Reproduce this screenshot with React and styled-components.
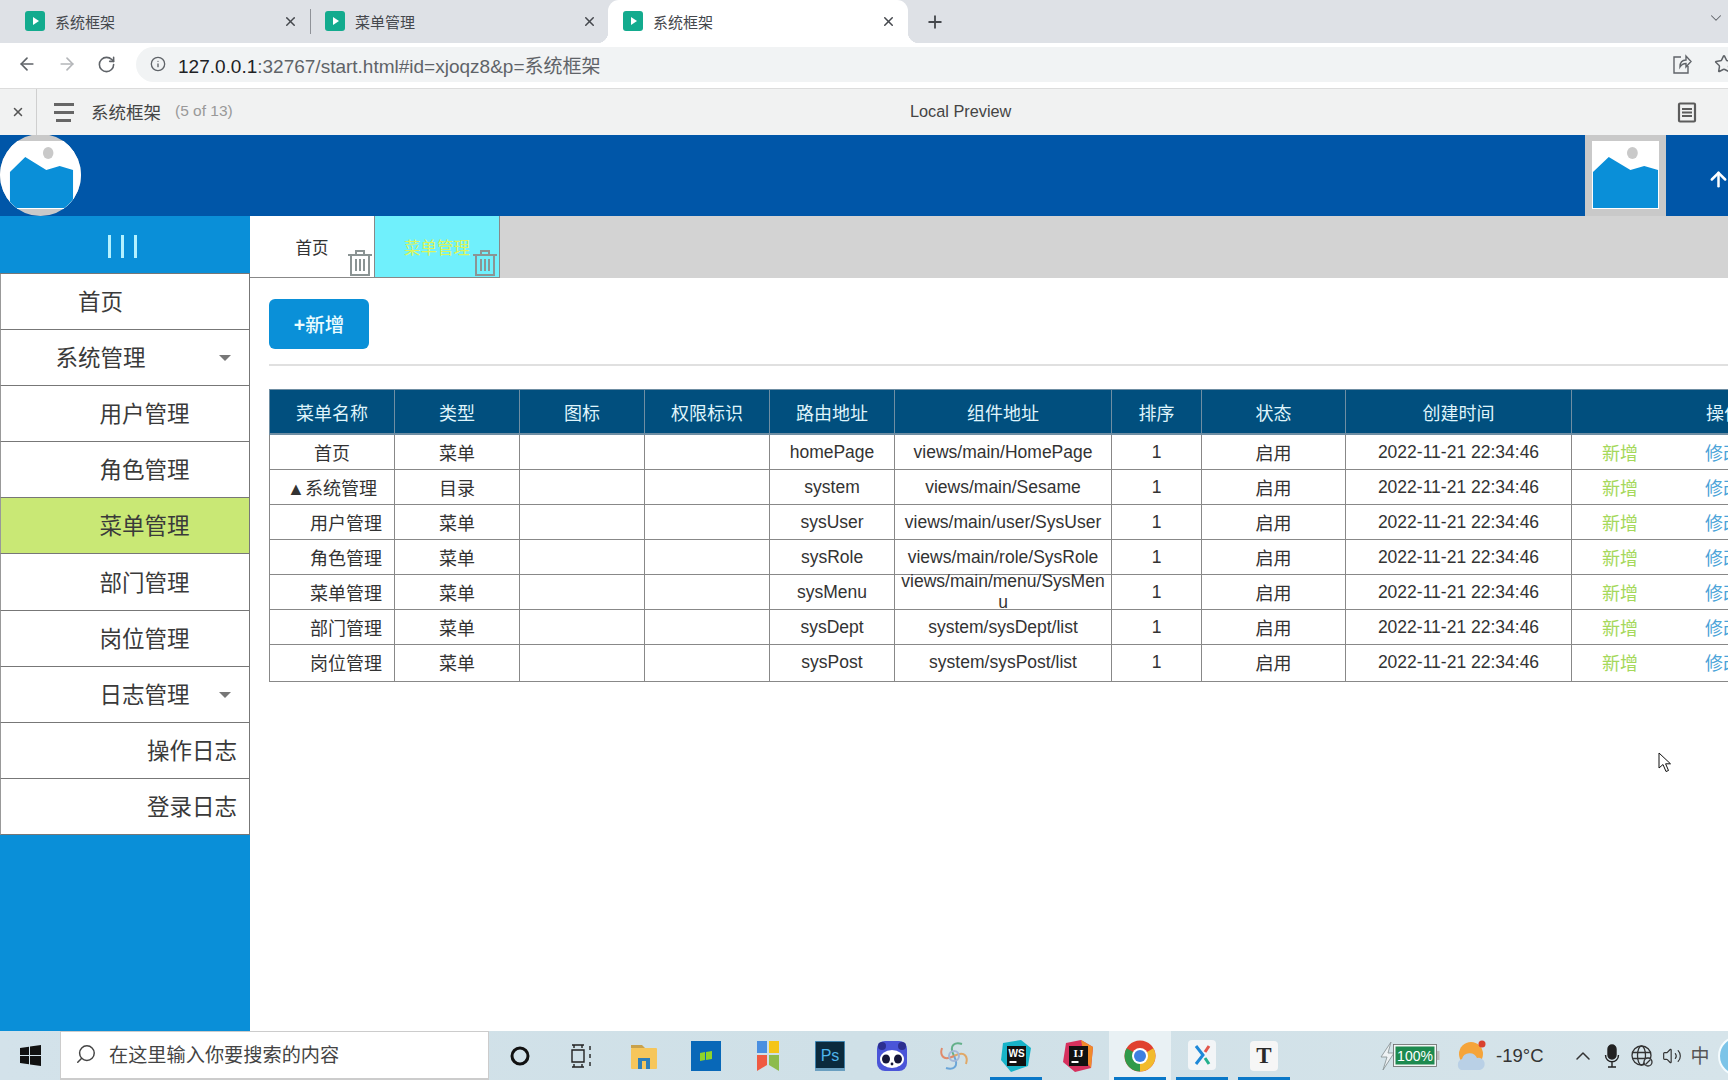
import React from 'react';
import styled, { createGlobalStyle } from 'styled-components';
import { ArrowLeft, ArrowRight, RotateCw, Info, Star, Plus, X, ChevronDown, ChevronUp, Search, Volume2, ArrowUp } from 'lucide-react';

const FONT = '"Liberation Sans", "Noto Sans CJK SC", sans-serif';

const GlobalStyle = createGlobalStyle`
  html, body {
    margin: 0;
    padding: 0;
    background: #fff;
    font-family: ${FONT};
  }
`;

const Page = styled.div`
  position: relative;
  display: flex;
  flex-direction: column;
  width: 1728px;
  height: 1080px;
  overflow: hidden;
  color: #333;
`;

/* browser chrome */
const TabStrip = styled.div`
  display: flex;
  align-items: stretch;
  flex: none;
  height: 43px;
  background: #dee1e6;
`;

const Tab = styled.div`
  position: relative;
  display: flex;
  align-items: center;
  box-sizing: border-box;
  width: ${p => p.$width}px;
  padding: 0 ${p => p.$end}px 1px ${p => p.$pad}px;
  background: ${p => (p.$active ? '#fff' : 'transparent')};
  border-radius: ${p => (p.$active ? '11px 11px 0 0' : '0')};
  color: #45484d;
  font-size: 15px;

  ${p => p.$active && `
    &::before, &::after {
      content: '';
      position: absolute;
      bottom: 0;
      width: 11px;
      height: 11px;
    }
    &::before {
      left: -11px;
      background: radial-gradient(circle at 0 0, #dee1e6 11px, #fff 11.5px);
    }
    &::after {
      right: -11px;
      background: radial-gradient(circle at 100% 0, #dee1e6 11px, #fff 11.5px);
    }
  `}
`;

const Favicon = styled.span`
  display: flex;
  align-items: center;
  justify-content: center;
  flex: none;
  width: 20px;
  height: 20px;
  margin-right: 10px;
  background: #13ab8e;
  border-radius: 3px;

  &::after {
    content: '';
    border-left: 6px solid #fff;
    border-top: 4px solid transparent;
    border-bottom: 4px solid transparent;
    margin-left: 2px;
  }
`;

const TabTitle = styled.span`
  flex: 1;
`;

const TabDivider = styled.span`
  align-self: center;
  flex: none;
  width: 1px;
  height: 25px;
  background: #8f9298;
`;

const NewTab = styled.div`
  display: flex;
  align-items: center;
  margin-left: 17px;
  color: #45484d;
`;

const StripEnd = styled.div`
  display: flex;
  align-items: center;
  margin-left: auto;
  padding: 0 3px 8px 0;
  color: #5f6368;
`;

const AddressBar = styled.div`
  display: flex;
  align-items: center;
  flex: none;
  box-sizing: border-box;
  height: 46px;
  padding: 0 0 3px 17px;
  background: #fff;
  border-bottom: 1px solid #dcdcdc;
`;

const NavButton = styled.span`
  display: flex;
  flex: none;
  width: 40px;
  color: ${p => (p.$disabled ? '#b4b6b9' : '#5f6368')};
`;

const UrlPill = styled.div`
  display: flex;
  align-items: center;
  flex: 1;
  height: 35px;
  margin-left: -1px;
  padding-left: 14px;
  background: #f1f3f4;
  border-radius: 18px 0 0 18px;
`;

const UrlText = styled.span`
  margin-left: 12px;
  color: #5f6368;
  font-size: 19px;

  b {
    font-weight: 400;
    color: #202124;
  }
`;

const UrlIcons = styled.div`
  display: flex;
  align-items: center;
  gap: 22px;
  margin-left: auto;
  margin-right: -6px;
  color: #5f6368;
`;

const PreviewBar = styled.div`
  position: relative;
  display: flex;
  align-items: center;
  flex: none;
  box-sizing: border-box;
  height: 46px;
  background: #f1f2f2;
`;

const PreviewClose = styled.span`
  display: flex;
  justify-content: center;
  align-items: center;
  box-sizing: border-box;
  width: 37px;
  height: 100%;
  border-right: 1px solid #cfcfcf;
  color: #555;
`;

const Hamburger = styled.span`
  display: flex;
  flex-direction: column;
  gap: 5px;
  width: 20px;
  margin-left: 17px;

  i {
    display: block;
    height: 3px;
    background: #666;
  }
  i:last-child {
    width: 15px;
    margin-left: 2px;
  }
`;

const PreviewTitle = styled.span`
  margin: 0 0 2px 17px;
  color: #444;
  font-size: 17.5px;
`;

const PreviewCount = styled.span`
  margin: 0 0 2px 14px;
  color: #999;
  font-size: 15.5px;
`;

const PreviewCenter = styled.span`
  position: absolute;
  left: 910px;
  top: 13px;
  color: #444;
  font-size: 16.3px;
`;

const PreviewDoc = styled.svg`
  position: absolute;
  left: 1677px;
  width: 20px;
  height: 21px;
`;

/* app header */
const AppHeader = styled.header`
  display: flex;
  align-items: stretch;
  flex: none;
  height: 81px;
  background: #0056a8;
`;

const Avatar = styled.div`
  flex: none;
  box-sizing: border-box;
  width: 81px;
  height: 82px;
  margin-top: -1px;
  padding-top: 7px;
  overflow: hidden;
  background: #c9c9c9;
  border-radius: 50%;
`;

const AvatarImage = styled.div`
  display: flex;
  justify-content: center;
  height: 68px;
  background: #fff;
`;

const AvatarPicture = styled.div`
  width: 65px;
  margin-left: 1px;
`;

const UserBox = styled.div`
  flex: none;
  box-sizing: border-box;
  width: 81px;
  height: 82px;
  margin: -1px 0 0 auto;
  padding: 7px;
  background: #c9c9c9;
`;

const HeaderTool = styled.div`
  display: flex;
  align-items: center;
  flex: none;
  box-sizing: border-box;
  width: 62px;
  padding: 7px 0 0 41px;
  color: #fff;

  svg {
    flex: none;
  }
`;

const PictureSvg = styled.svg`
  display: block;
  width: 100%;
  height: 100%;
  background: #fff;
`;

const Picture = () => (
  <PictureSvg viewBox="0 0 68 68" preserveAspectRatio="none">
    <ellipse cx="41" cy="12" rx="5.5" ry="6" fill="#c9c9c9" />
    <path d="M1 31 17 16 39 29 53 25 67 29V67H1Z" fill="#0a8fd8" />
  </PictureSvg>
);

/* body */
const Body = styled.div`
  display: flex;
  flex: 1;
  min-height: 0;
`;

const Sidebar = styled.aside`
  flex: none;
  width: 250px;
  background: #0a8fd8;
`;

const Toggle = styled.div`
  display: flex;
  justify-content: center;
  gap: 10px;
  box-sizing: border-box;
  height: 58px;
  padding: 19px 6px 0 0;
  border-bottom: 1px solid #777;

  i {
    display: block;
    width: 3px;
    height: 23px;
    background: #b4f1ff;
  }
`;

const MenuList = styled.ul`
  margin: 0;
  padding: 0;
  list-style: none;
`;

const MenuItem = styled.li`
  position: relative;
  display: flex;
  align-items: center;
  box-sizing: border-box;
  height: 56.1px;
  padding: 0 0 3px ${p => [0, 44, 134][p.$level]}px;
  background: ${p => (p.$active ? '#c9e875' : '#fff')};
  border: 1px solid #777;
  border-top: 0;
  border-left-color: #999;
  color: #3a3a3a;
  font-size: 22.5px;
`;

const MenuLabel = styled.span`
  width: 199px;
  text-align: center;
`;

const Caret = styled.span`
  position: absolute;
  right: 18px;
  top: 25px;
  border-top: 6px solid #777;
  border-left: 6px solid transparent;
  border-right: 6px solid transparent;
`;

const Main = styled.main`
  position: relative;
  flex: 1;
  min-width: 0;
  overflow: hidden;
  background: #fff;
`;

const PageTabs = styled.div`
  display: flex;
  height: 62px;
  background: #d3d3d3;
`;

const PageTab = styled.div`
  position: relative;
  display: flex;
  align-items: center;
  justify-content: center;
  box-sizing: border-box;
  width: 125px;
  background: ${p => (p.$active ? '#70f0fc' : '#fff')};
  border-bottom: 1px solid #888;
  border-right: 1px solid #888;
  color: ${p => (p.$active ? '#dcf55a' : '#333')};
  font-size: 16.5px;
`;

const TrashIcon = styled.svg`
  position: absolute;
  right: 1px;
  bottom: 0;
  width: 26px;
  height: 28px;
`;

const Trash = () => (
  <TrashIcon viewBox="0 0 26 28" fill="none" stroke="#8b9494" strokeWidth="2">
    <path d="M1 6H25M9 6V2H17V6M4 6V26H22V6M9 10V22M13 10V22M17 10V22" />
  </TrashIcon>
);

const Toolbar = styled.div`
  margin: 21px 0 0 19px;
  padding-bottom: 15px;
  border-bottom: 2px solid #e0e0e0;
`;

const AddButton = styled.button`
  display: block;
  width: 100px;
  height: 50px;
  padding: 0 0 2px;
  background: #0a90d8;
  border: 0;
  border-radius: 6px;
  color: #eafcff;
  font-family: ${FONT};
  font-size: 19.5px;
  font-weight: 500;
`;

const Table = styled.table`
  width: 1607px;
  margin: 23px 0 0 19px;
  border-collapse: collapse;
  table-layout: fixed;
`;

const HeadCell = styled.th`
  height: 43px;
  padding: 0;
  background: #014f7e;
  border: 1px solid #6f8ea3;
  border-bottom-width: 2px;
  color: #dff4fb;
  font-size: 18px;
  font-weight: 400;
`;

const Cell = styled.td`
  height: 34px;
  padding: 0;
  border: 1px solid #888;
  color: #333;
  font-size: 17.5px;
  text-align: center;
  vertical-align: top;

  tr:last-child & {
    height: 36px;
  }
`;

const CellBox = styled.div`
  display: flex;
  align-items: center;
  justify-content: center;
  box-sizing: border-box;
  height: 34px;
  padding: 0 5px 0 ${p => (p.$indent ? 33 : 5)}px;
  line-height: 21px;
  word-break: break-all;
`;

const CjkText = styled.span`
  padding-top: 5px;
  font-size: 18px;
`;

const ActionBox = styled.div`
  display: flex;
  align-items: center;
  gap: 67px;
  height: 34px;
  padding-left: 30px;
  box-sizing: border-box;
  font-size: 18px;
`;

const ActionLink = styled.a`
  color: ${p => p.$color};
`;

const Cursor = styled.svg`
  position: absolute;
  left: 1408px;
  top: 536px;
  width: 14px;
  height: 21px;
`;

/* windows taskbar */
const Taskbar = styled.footer`
  display: flex;
  align-items: stretch;
  flex: none;
  height: 49px;
  background: linear-gradient(90deg, #d3e2ea, #cfe0e7 50%, #d6e4ea);
`;

const StartButton = styled.div`
  display: flex;
  align-items: center;
  justify-content: center;
  flex: none;
  width: 60px;
`;

const SearchBox = styled.div`
  display: flex;
  align-items: center;
  flex: none;
  gap: 12px;
  box-sizing: border-box;
  width: 429px;
  padding: 0 0 2px 14px;
  background: #fff;
  border: 1px solid #ccc;
  border-bottom-width: 2px;
  color: #444;
  font-size: 19.2px;
`;

const TaskItem = styled.div`
  position: relative;
  display: flex;
  align-items: center;
  justify-content: center;
  flex: none;
  width: 62px;
  background: ${p => (p.$active ? '#e9f1f4' : 'transparent')};

  ${p => p.$running && `
    &::after {
      content: '';
      position: absolute;
      left: 5px;
      right: 5px;
      bottom: 0;
      height: 3px;
      background: #0a78c8;
    }
  `}
`;

const Tray = styled.div`
  display: flex;
  align-items: center;
  flex: none;
  margin-left: 83px;
  color: #333;
  font-size: 18.5px;
`;

const TrayItem = styled.span`
  display: flex;
  align-items: center;
  flex: none;
  margin-left: ${p => p.$gap || 0}px;
`;

const ImeMark = styled.span`
  display: flex;
  flex: none;
  margin: 0 0 2px 9px;
  color: #555;
  font-size: 19px;
`;

const NotifyBubble = styled.span`
  flex: none;
  box-sizing: border-box;
  width: 40px;
  height: 40px;
  margin-left: 8px;
  background: #7cc4e8;
  border: 2px solid #f4fbfe;
  border-radius: 50%;
`;

const Windows = () => (
  <svg width="21" height="21" viewBox="0 0 21 21" fill="#111">
    <path d="M0 3 9 1.7V10H0ZM10 1.5 21 0V10H10ZM0 11H9V19.3L0 18ZM10 11H21V21L10 19.5Z" />
  </svg>
);

const TaskView = () => (
  <svg width="22" height="24" viewBox="0 0 22 24" fill="none" stroke="#222" strokeWidth="1.4">
    <path d="M1 1H13M1 23H13M1 6H13V18H1ZM3 1V4M11 1V4M3 20V23M11 20V23M19 2V6M19 10V14M19 18V22" />
  </svg>
);

const Folder = () => (
  <svg width="28" height="26" viewBox="0 0 28 26">
    <path d="M1 2H12L15 5H1Z" fill="#c9a24c" />
    <rect x="1" y="5" width="26" height="21" rx="1" fill="#f6c65b" />
    <path d="M8 26V15H20V26H16V18H12V26Z" fill="#2f7fb8" />
  </svg>
);

const GreenTile = () => (
  <svg width="30" height="30" viewBox="0 0 30 30">
    <rect width="30" height="30" fill="#0868b8" />
    <path d="M9 12 14 11V19L9 20ZM15 11 21 10V18L15 19Z" fill="#8fd42a" />
  </svg>
);

const Bookmark = () => (
  <svg width="24" height="30" viewBox="0 0 24 30">
    <rect x="1" y="0" width="10" height="12" fill="#4a8fe0" />
    <rect x="13" y="0" width="10" height="12" fill="#f5c518" />
    <path d="M1 14H11V24L1 30Z" fill="#ef5a42" />
    <path d="M13 14H23V30L13 24Z" fill="#8dbb4d" />
  </svg>
);

const Photoshop = () => (
  <svg width="30" height="30" viewBox="0 0 30 30">
    <rect width="30" height="28" fill="#0b2a3d" stroke="#4f9fd0" strokeWidth="1.5" />
    <rect y="27" width="30" height="3" fill="#6a9fc0" />
    <text x="15" y="20" fill="#4fb4ea" fontFamily="Liberation Sans" fontSize="16" textAnchor="middle">Ps</text>
  </svg>
);

const Panda = () => (
  <svg width="30" height="30" viewBox="0 0 30 30">
    <rect width="30" height="30" rx="8" fill="#4a55d8" />
    <circle cx="5" cy="5" r="4" fill="#2c2f90" />
    <circle cx="25" cy="5" r="4" fill="#2c2f90" />
    <ellipse cx="15" cy="18" rx="12" ry="9" fill="#fff" />
    <ellipse cx="9" cy="18" rx="4" ry="4.5" fill="#15163a" />
    <ellipse cx="21" cy="18" rx="4" ry="4.5" fill="#15163a" />
    <circle cx="15" cy="23" r="1.4" fill="#15163a" />
  </svg>
);

const Swirl = () => (
  <svg width="32" height="32" viewBox="0 0 32 32" fill="none" strokeWidth="2">
    <path d="M16 16C10 4 18 2 24 4" stroke="#63b08a" />
    <path d="M16 16C28 10 30 18 28 24" stroke="#e0a867" />
    <path d="M16 16C22 28 14 30 8 28" stroke="#6aa5d8" />
    <path d="M16 16C4 22 2 14 4 8" stroke="#e08a6a" />
    <circle cx="16" cy="16" r="5" stroke="#a5b8d8" />
  </svg>
);

const WebStorm = () => (
  <svg width="30" height="32" viewBox="0 0 30 32">
    <path d="M2 3 20 0 30 8 27 26 10 32 0 20Z" fill="#17b3c8" />
    <rect x="6" y="6" width="19" height="20" fill="#111" />
    <rect x="8.5" y="21" width="7" height="2" fill="#fff" />
    <text x="15.5" y="17" fill="#fff" fontFamily="Liberation Sans" fontWeight="700" fontSize="10" textAnchor="middle">WS</text>
  </svg>
);

const Idea = () => (
  <svg width="30" height="32" viewBox="0 0 30 32">
    <path d="M3 3 18 0 30 7 28 28 12 32 0 22Z" fill="#d6315e" />
    <path d="M18 0 30 7 28 28 22 20Z" fill="#f08a2a" />
    <rect x="6" y="6" width="19" height="20" fill="#111" />
    <rect x="8.5" y="21" width="7" height="2" fill="#fff" />
    <text x="15.5" y="17" fill="#fff" fontFamily="Liberation Serif" fontWeight="700" fontSize="11" textAnchor="middle">IJ</text>
  </svg>
);

const Chrome = () => (
  <svg width="32" height="32" viewBox="0 0 32 32">
    <circle cx="16" cy="16" r="15.5" fill="#e0402f" />
    <path d="M16 16 29.4 8.3A15.5 15.5 0 0 1 16 31.5Z" fill="#f2bb2c" />
    <path d="M16 16 16 31.5A15.5 15.5 0 0 1 2.6 8.3Z" fill="#2f9a4a" />
    <circle cx="16" cy="16" r="8" fill="#fff" />
    <circle cx="16" cy="16" r="6" fill="#3f7fe0" />
  </svg>
);

const XApp = () => (
  <svg width="28" height="32" viewBox="0 0 28 32">
    <rect width="28" height="30" rx="4" fill="#f2f5f7" />
    <path d="M8 6 15 15 8 24" fill="none" stroke="#1e88d8" strokeWidth="3" />
    <path d="M21 6 17 12" fill="none" stroke="#e2574c" strokeWidth="3" />
    <path d="M17 18 21 24" fill="none" stroke="#23b08d" strokeWidth="3" />
  </svg>
);

const TApp = styled.span`
  display: flex;
  align-items: center;
  justify-content: center;
  width: 28px;
  height: 30px;
  background: #f6f6f6;
  border-radius: 4px;
  color: #2a2a2a;
  font-family: "Liberation Serif", serif;
  font-size: 23px;
  font-weight: 700;
`;

const Battery = () => (
  <svg width="62" height="28" viewBox="0 0 62 28">
    <path d="M13 0 3 15H9L5 28 16 11H10Z" fill="#eef2f4" stroke="#8c9699" strokeWidth="0.9" />
    <rect x="16.5" y="3.5" width="41" height="20" fill="#1d8a4f" stroke="#f4f6f6" strokeWidth="2" />
    <rect x="15.5" y="2.5" width="43" height="22" fill="none" stroke="#666" strokeWidth="0.8" />
    <rect x="59" y="9" width="2.5" height="9" fill="#bbb" />
    <text x="37" y="19" fill="#fff" fontFamily="Liberation Sans" fontSize="14" textAnchor="middle">100%</text>
  </svg>
);

const Weather = () => (
  <svg width="32" height="32" viewBox="0 0 32 32">
    <circle cx="16" cy="14" r="12" fill="#f5a43a" />
    <circle cx="27" cy="4" r="3.5" fill="#d9412e" />
    <path d="M6 30a6 6 0 0 1 1-11 8 8 0 0 1 15-1 6 6 0 0 1 3 12Z" fill="#b9d0e6" />
  </svg>
);

const MicIcon = () => (
  <svg width="16" height="24" viewBox="0 0 16 24" fill="none" stroke="#222" strokeWidth="1.4">
    <rect x="4" y="1" width="8" height="14" rx="4" fill="#222" />
    <path d="M1.5 11C1.5 20 14.5 20 14.5 11M8 18V23M4 23H12" />
  </svg>
);

const GlobeIcon = () => (
  <svg width="22" height="22" viewBox="0 0 22 22" fill="none" stroke="#333" strokeWidth="1.3">
    <circle cx="10.5" cy="10.5" r="9.5" />
    <ellipse cx="10.5" cy="10.5" rx="4" ry="9.5" />
    <path d="M1.5 7.5H19.5M1.5 13.5H19.5" />
    <circle cx="17" cy="17" r="4" fill="#d5e3ea" />
    <path d="M14.5 19.5 19.5 14.5" />
  </svg>
);

const Pointer = () => (
  <Cursor viewBox="0 0 14 21" fill="#fff" stroke="#111" strokeWidth="1">
    <path d="M1 1V16L5 12.5 8 19.5 10.5 18.5 7.6 11.8H12.5Z" />
  </Cursor>
);

const MENU = [
  { label: '首页', level: 0 },
  { label: '系统管理', level: 0, caret: true },
  { label: '用户管理', level: 1 },
  { label: '角色管理', level: 1 },
  { label: '菜单管理', level: 1, active: true },
  { label: '部门管理', level: 1 },
  { label: '岗位管理', level: 1 },
  { label: '日志管理', level: 1, caret: true },
  { label: '操作日志', level: 2 },
  { label: '登录日志', level: 2 },
];

const COLUMNS = [
  ['菜单名称', 125],
  ['类型', 125],
  ['图标', 125],
  ['权限标识', 125],
  ['路由地址', 125],
  ['组件地址', 217],
  ['排序', 90],
  ['状态', 144],
  ['创建时间', 226],
  ['操作', 305],
];

const ROWS = [
  { name: '首页', type: '菜单', route: 'homePage', path: 'views/main/HomePage' },
  { name: '▲系统管理', type: '目录', route: 'system', path: 'views/main/Sesame' },
  { name: '用户管理', type: '菜单', route: 'sysUser', path: 'views/main/user/SysUser', child: true },
  { name: '角色管理', type: '菜单', route: 'sysRole', path: 'views/main/role/SysRole', child: true },
  { name: '菜单管理', type: '菜单', route: 'sysMenu', path: 'views/main/menu/SysMenu', child: true },
  { name: '部门管理', type: '菜单', route: 'sysDept', path: 'system/sysDept/list', child: true },
  { name: '岗位管理', type: '菜单', route: 'sysPost', path: 'system/sysPost/list', child: true },
];

const TASK_ITEMS = [
  { key: 'cortana', icon: <svg width="20" height="20" viewBox="0 0 20 20"><circle cx="10" cy="10" r="8" fill="none" stroke="#111" strokeWidth="3" /></svg> },
  { key: 'view', icon: <TaskView /> },
  { key: 'folder', icon: <Folder /> },
  { key: 'tile', icon: <GreenTile /> },
  { key: 'bookmark', icon: <Bookmark /> },
  { key: 'ps', icon: <Photoshop /> },
  { key: 'panda', icon: <Panda /> },
  { key: 'swirl', icon: <Swirl /> },
  { key: 'ws', icon: <WebStorm />, running: true },
  { key: 'ij', icon: <Idea /> },
  { key: 'chrome', icon: <Chrome />, running: true, active: true },
  { key: 'x', icon: <XApp />, running: true },
  { key: 't', icon: <TApp>T</TApp>, running: true },
];

const BROWSER_TABS = [
  { title: '系统框架', width: 310, pad: 25, end: 12 },
  { title: '菜单管理', width: 297, pad: 14, end: 11 },
  { title: '系统框架', width: 300, pad: 15, end: 12, active: true },
];

export default function App() {
  return (
    <Page>
      <GlobalStyle />

      <TabStrip>
        {BROWSER_TABS.map((tab, index) => (
          <React.Fragment key={index}>
            {index === 1 && <TabDivider />}
            <Tab $width={tab.width} $pad={tab.pad} $end={tab.end} $active={tab.active}>
              <Favicon />
              <TabTitle>{tab.title}</TabTitle>
              <X size={15} strokeWidth={2.4} />
            </Tab>
          </React.Fragment>
        ))}
        <NewTab>
          <Plus size={20} strokeWidth={2.2} />
        </NewTab>
        <StripEnd>
          <ChevronDown size={18} strokeWidth={1.4} />
        </StripEnd>
      </TabStrip>

      <AddressBar>
        <NavButton><ArrowLeft size={20} /></NavButton>
        <NavButton $disabled><ArrowRight size={20} /></NavButton>
        <NavButton><RotateCw size={19} /></NavButton>
        <UrlPill>
          <Info size={16} color="#5f6368" />
          <UrlText><b>127.0.0.1</b>:32767/start.html#id=xjoqz8&amp;p=系统框架</UrlText>
          <UrlIcons>
            <svg width="20" height="22" viewBox="0 0 20 22" fill="none" stroke="#5f6368" strokeWidth="1.4">
              <path d="M9 4H2V20H16V13M8 14C8 9 11 7 14 7V3L19 8.5 14 14V10.5C11.5 10.5 9.5 11.5 8 14Z" />
            </svg>
            <Star size={20} strokeWidth={1.8} />
          </UrlIcons>
        </UrlPill>
      </AddressBar>

      <PreviewBar>
        <PreviewClose><X size={14} strokeWidth={2.6} /></PreviewClose>
        <Hamburger><i /><i /><i /></Hamburger>
        <PreviewTitle>系统框架</PreviewTitle>
        <PreviewCount>(5 of 13)</PreviewCount>
        <PreviewCenter>Local Preview</PreviewCenter>
        <PreviewDoc viewBox="0 0 20 21" fill="none" stroke="#5c5c5c">
          <rect x="2" y="1.5" width="16" height="18" strokeWidth="2.2" rx="1" />
          <path d="M5 7H15M5 10.5H15M5 14H15" strokeWidth="1.8" />
        </PreviewDoc>
      </PreviewBar>

      <AppHeader>
        <Avatar>
          <AvatarImage>
            <AvatarPicture><Picture /></AvatarPicture>
          </AvatarImage>
        </Avatar>
        <UserBox><Picture /></UserBox>
        <HeaderTool><ArrowUp size={23} strokeWidth={2.6} /></HeaderTool>
      </AppHeader>

      <Body>
        <Sidebar>
          <Toggle><i /><i /><i /></Toggle>
          <MenuList>
            {MENU.map(item => (
              <MenuItem key={item.label} $level={item.level} $active={item.active}>
                <MenuLabel>{item.label}</MenuLabel>
                {item.caret && <Caret />}
              </MenuItem>
            ))}
          </MenuList>
        </Sidebar>

        <Main>
          <PageTabs>
            <PageTab>首页<Trash /></PageTab>
            <PageTab $active>菜单管理<Trash /></PageTab>
          </PageTabs>

          <Toolbar>
            <AddButton><b>+</b>新增</AddButton>
          </Toolbar>

          <Table>
            <colgroup>
              {COLUMNS.map(([title, width]) => <col key={title} width={width} />)}
            </colgroup>
            <thead>
              <tr>
                {COLUMNS.map(([title]) => <HeadCell key={title}>{title}</HeadCell>)}
              </tr>
            </thead>
            <tbody>
              {ROWS.map(row => (
                <tr key={row.route}>
                  <Cell><CellBox $indent={row.child}><CjkText>{row.name}</CjkText></CellBox></Cell>
                  <Cell><CellBox><CjkText>{row.type}</CjkText></CellBox></Cell>
                  <Cell />
                  <Cell />
                  <Cell><CellBox>{row.route}</CellBox></Cell>
                  <Cell><CellBox>{row.path}</CellBox></Cell>
                  <Cell><CellBox>1</CellBox></Cell>
                  <Cell><CellBox><CjkText>启用</CjkText></CellBox></Cell>
                  <Cell><CellBox>2022-11-21 22:34:46</CellBox></Cell>
                  <Cell>
                    <ActionBox>
                      <ActionLink $color="#a5d85a">新增</ActionLink>
                      <ActionLink $color="#4aa3d8">修改</ActionLink>
                    </ActionBox>
                  </Cell>
                </tr>
              ))}
            </tbody>
          </Table>

          <Pointer />
        </Main>
      </Body>

      <Taskbar>
        <StartButton><Windows /></StartButton>
        <SearchBox>
          <Search size={22} strokeWidth={1.6} style={{ transform: 'scaleX(-1)' }} />
          在这里输入你要搜索的内容
        </SearchBox>
        {TASK_ITEMS.map(item => (
          <TaskItem key={item.key} $running={item.running} $active={item.active}>{item.icon}</TaskItem>
        ))}
        <Tray>
          <TrayItem><Battery /></TrayItem>
          <TrayItem $gap={15}><Weather /></TrayItem>
          <TrayItem $gap={9}>-19°C</TrayItem>
          <TrayItem $gap={27}><ChevronUp size={24} strokeWidth={1.5} /></TrayItem>
          <TrayItem $gap={9}><MicIcon /></TrayItem>
          <TrayItem $gap={11}><GlobeIcon /></TrayItem>
          <TrayItem $gap={9}><Volume2 size={20} strokeWidth={1.4} /></TrayItem>
          <ImeMark>中</ImeMark>
          <NotifyBubble />
        </Tray>
      </Taskbar>
    </Page>
  );
}
